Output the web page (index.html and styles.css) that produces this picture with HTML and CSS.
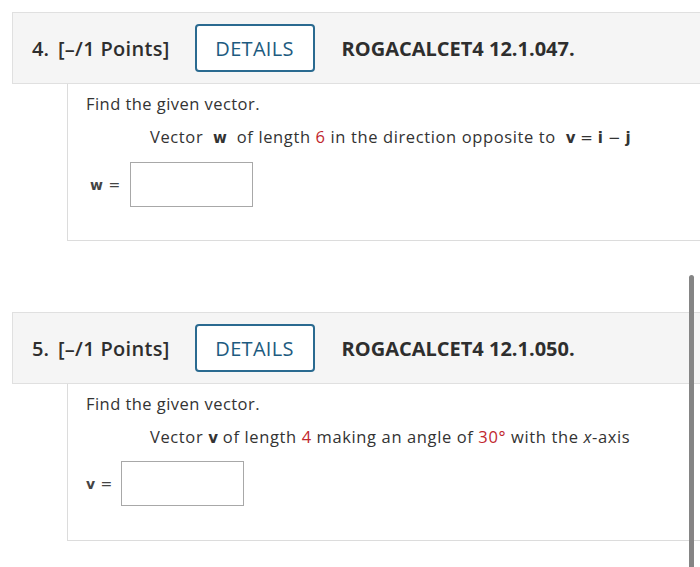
FILE: index.html
```html
<!DOCTYPE html>
<html>
<head>
<meta charset="utf-8">
<link rel="stylesheet" href="styles.css">
</head>
<body>
<div class="page">
  <section class="question">
    <header class="q-head">
      <span class="q-num">4.</span>
      <span class="q-pts">[–/1 Points]</span>
      <button class="details">DETAILS</button>
      <span class="q-code">ROGACALCET4 12.1.047.</span>
    </header>
    <div class="q-body">
      <p class="lead">Find the given vector.</p>
      <p class="prob">Vector&nbsp; <b class="m">w</b>&nbsp; of length <span class="red">6</span> in the direction opposite to&nbsp; <b class="m">v</b> <span class="m">=</span> <b class="m">i</b> <span class="m">−</span> <b class="m">j</b></p>
      <div class="answer a1">
        <span class="lbl"><b>w</b> =</span>
        <span class="box"></span>
      </div>
    </div>
  </section>
  <section class="question q2">
    <header class="q-head">
      <span class="q-num">5.</span>
      <span class="q-pts">[–/1 Points]</span>
      <button class="details">DETAILS</button>
      <span class="q-code">ROGACALCET4 12.1.050.</span>
    </header>
    <div class="q-body">
      <p class="lead">Find the given vector.</p>
      <p class="prob">Vector <b class="m">v</b> of length <span class="red">4</span> making an angle of <span class="red">30°</span> with the <i>x</i>-axis</p>
      <div class="answer a2">
        <span class="lbl"><b>v</b> =</span>
        <span class="box"></span>
      </div>
    </div>
  </section>
  <div class="scrollbar"></div>
</div>
</body>
</html>
```

FILE: styles.css
```css
* { box-sizing: border-box; }
html, body { margin: 0; padding: 0; background: #fff; }
body {
  font-family: "Open Sans", "Liberation Sans", sans-serif;
  color: #333;
  width: 700px;
  height: 567px;
  overflow: hidden;
}
.page {
  position: relative;
  padding-top: 12px;
  padding-left: 12px;
  height: 567px;
}
.question { width: 720px; }
.q2 { margin-top: 71px; }
.q-head {
  height: 72px;
  background: #f5f5f5;
  border: 1px solid #e0e0e0;
  display: flex;
  align-items: center;
  padding-left: 19px;
  font-size: 20px;
  font-weight: 600;
  color: #2e2e2e;
}
.q-num { margin-right: 9px; }
.q-pts { margin-right: 25px; letter-spacing: 0.3px; }
.details {
  width: 120px;
  height: 48px;
  border: 2px solid #2a6a90;
  border-radius: 4px;
  background: #fff;
  color: #1d5b80;
  font-family: "Open Sans", "Liberation Sans", sans-serif;
  font-size: 20px;
  font-weight: 400;
  letter-spacing: 0.3px;
  padding: 0;
  margin-right: 27px;
}
.q-code { font-weight: 700; }
.q-body {
  margin-left: 55px;
  border-left: 1px solid #dcdcdc;
  border-bottom: 1px solid #dcdcdc;
  height: 157px;
  padding-left: 18px;
  padding-top: 9px;
  font-size: 16.5px;
  letter-spacing: 0.45px;
}
.lead { margin: 0; line-height: 22px; }
.prob {
  margin: 11px 0 0 64px;
  line-height: 22px;
  letter-spacing: 0.62px;
}
.m { font-family: "DejaVu Sans", Verdana, sans-serif; font-size: 15px; letter-spacing: 0; }
b.m { font-weight: 700; }
.red { color: #c1272d; }
.answer {
  display: flex;
  align-items: center;
  margin-top: 13px;
}
.a2 { margin-top: 12px; }
.lbl {
  font-family: "DejaVu Sans", Verdana, sans-serif;
  font-size: 14px;
  letter-spacing: 0.5px;
  color: #444;
  margin-left: 4px;
  margin-right: 9px;
}
.a2 .lbl { margin-left: 0; margin-right: 8px; }
.box {
  display: block;
  width: 123px;
  height: 45px;
  border: 1px solid #a8a8a8;
  background: #fff;
}
.scrollbar {
  position: absolute;
  left: 689px;
  top: 275px;
  width: 5px;
  height: 300px;
  background: #858585;
  border-radius: 3px;
}
```
